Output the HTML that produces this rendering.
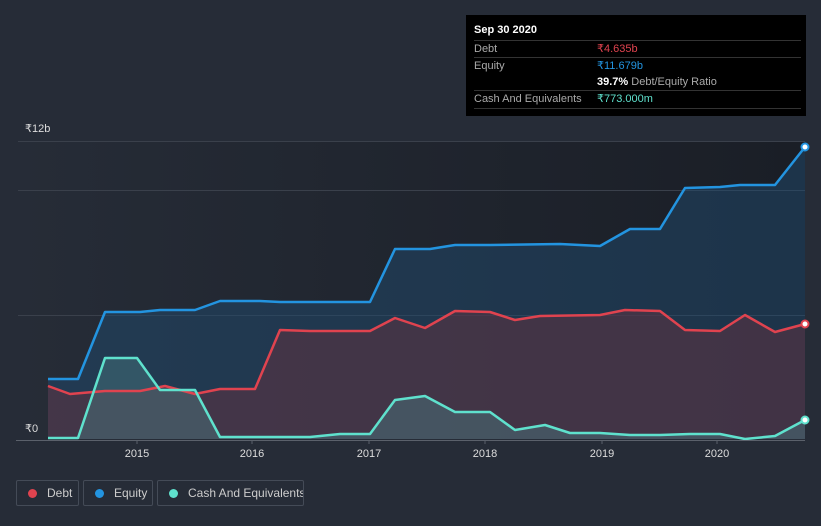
<!DOCTYPE html>
<html><head><meta charset="utf-8"><style>
html,body{margin:0;background:#262c37;width:821px;height:526px;overflow:hidden;font-family:"Liberation Sans",sans-serif;}
.tt{position:absolute;left:466px;top:15px;width:340px;height:101px;background:#000;color:#fff;font-size:11px;}
.row{position:absolute;left:8px;width:327px;border-top:1px solid #333;height:17px;line-height:17px;color:#aaa}
.lg{position:absolute;top:480px;height:26px;border:1px solid #444b57;border-radius:2px;color:#ccc;font-size:12px;line-height:25px;box-sizing:border-box;white-space:nowrap;overflow:hidden}
.dot{display:inline-block;width:9px;height:9px;border-radius:50%;margin:0 10px 0 11px;vertical-align:-1px}
</style></head><body>
<svg width="821" height="526" style="position:absolute;left:0;top:0">
<defs><linearGradient id="bg" x1="0" x2="1"><stop offset="0" stop-color="#262c37"/><stop offset="1" stop-color="#1a1e26"/></linearGradient></defs>
<rect x="18" y="141" width="787" height="298" fill="url(#bg)"/>
<g stroke="#3a404b" stroke-width="1"><line x1="18" y1="141.5" x2="805" y2="141.5"/><line x1="18" y1="190.5" x2="805" y2="190.5"/><line x1="18" y1="315.5" x2="805" y2="315.5"/></g>
<polygon fill="#1f4a6e" fill-opacity="0.5" points="48,439 48,379 78,379 105,312 140,312 160,310 195,310 220,301 260,301 280,302 370,302 395,249 430,249 455,245 490,245 560,244 600,246 630,229 660,229 685,188 720,187 740,185 775,185 805,147 805,439"/>
<polygon fill="#5a3442" fill-opacity="0.6" points="48,439 48,386 70,394 105,391 140,391 165,386 195,394 220,389 255,389 280,330 310,331 370,331 395,318 425,328 455,311 490,312 515,320 540,316 600,315 625,310 660,311 685,330 720,331 745,315 775,332 805,324 805,439"/>
<polygon fill="#4a7a80" fill-opacity="0.45" points="48,439 48,438 78,438 105,358 137,358 160,390 195,390 220,437 310,437 340,434 370,434 395,400 425,396 455,412 490,412 515,430 545,425 570,433 600,433 630,435 660,435 690,434 720,434 745,439 775,436 805,420 805,439"/>
<g fill="none" stroke-width="2.5" stroke-linejoin="round">
<polyline stroke="#2394e0" points="48,379 78,379 105,312 140,312 160,310 195,310 220,301 260,301 280,302 370,302 395,249 430,249 455,245 490,245 560,244 600,246 630,229 660,229 685,188 720,187 740,185 775,185 805,147"/>
<polyline stroke="#e0434f" points="48,386 70,394 105,391 140,391 165,386 195,394 220,389 255,389 280,330 310,331 370,331 395,318 425,328 455,311 490,312 515,320 540,316 600,315 625,310 660,311 685,330 720,331 745,315 775,332 805,324"/>
<polyline stroke="#5fe1cd" points="48,438 78,438 105,358 137,358 160,390 195,390 220,437 310,437 340,434 370,434 395,400 425,396 455,412 490,412 515,430 545,425 570,433 600,433 630,435 660,435 690,434 720,434 745,439 775,436 805,420"/>
</g>
<circle cx="805" cy="147" r="3.5" fill="#fff" stroke="#2394e0" stroke-width="2"/>
<circle cx="805" cy="324" r="3.5" fill="#fff" stroke="#e0434f" stroke-width="2"/>
<circle cx="805" cy="420" r="3.5" fill="#fff" stroke="#5fe1cd" stroke-width="2"/>
<line x1="16" y1="440.5" x2="805" y2="440.5" stroke="#5b616b"/>
<g stroke="#5b616b"><line x1="137" y1="440" x2="137" y2="444"/><line x1="252" y1="440" x2="252" y2="444"/><line x1="369" y1="440" x2="369" y2="444"/><line x1="485" y1="440" x2="485" y2="444"/><line x1="602" y1="440" x2="602" y2="444"/><line x1="717" y1="440" x2="717" y2="444"/></g>
<g fill="#ddd" font-size="11" text-anchor="middle"><text x="137" y="457">2015</text><text x="252" y="457">2016</text><text x="369" y="457">2017</text><text x="485" y="457">2018</text><text x="602" y="457">2019</text><text x="717" y="457">2020</text></g>
<g fill="#ddd" font-size="11"><text x="25" y="132">₹12b</text><text x="25" y="432">₹0</text></g>
</svg>
<div class="tt">
<div style="position:absolute;left:8px;top:9px;font-weight:bold">Sep 30 2020</div>
<div class="row" style="top:25px">Debt<span style="position:absolute;left:123px;color:#e0434f">₹4.635b</span></div>
<div class="row" style="top:42px">Equity<span style="position:absolute;left:123px;color:#2394e0">₹11.679b</span></div>
<div class="row" style="top:59px;border:none"><span style="position:absolute;left:123px;color:#fff;white-space:nowrap"><b>39.7%</b> <span style="color:#aaa">Debt/Equity Ratio</span></span></div>
<div class="row" style="top:75px;border-bottom:1px solid #333">Cash And Equivalents<span style="position:absolute;left:123px;color:#5fe1cd">₹773.000m</span></div>
</div>
<div class="lg" style="left:16px;width:63px"><span class="dot" style="background:#e0434f"></span>Debt</div>
<div class="lg" style="left:83px;width:70px"><span class="dot" style="background:#2394e0"></span>Equity</div>
<div class="lg" style="left:157px;width:147px"><span class="dot" style="background:#5fe1cd"></span>Cash And Equivalents</div>
</body></html>
